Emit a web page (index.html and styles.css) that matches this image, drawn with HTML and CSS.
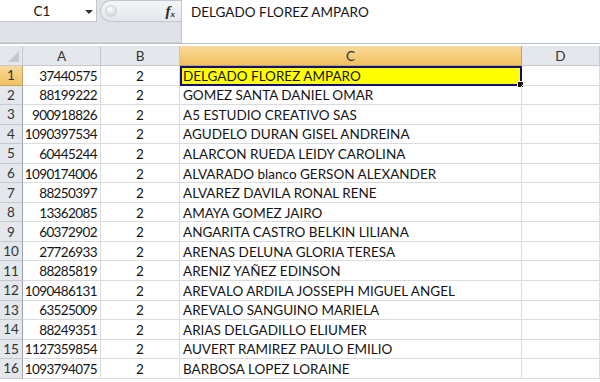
FILE: index.html
```html
<!DOCTYPE html>
<html lang="es">
<head>
    <meta charset="UTF-8">
    <title>Hoja de cálculo</title>
    <link rel="stylesheet" href="styles.css">
</head>
<body>

    <div class="formula-bar">
        <div class="left-part">
            <div class="top-row">
                <div class="name-box">
                    <span class="cell-ref">C1</span>
                    <span class="drop-arrow"></span>
                </div>
                <div class="fx-box">
                    <span class="grip"></span>
                    <span class="fx">f<sub>x</sub></span>
                </div>
            </div>
        </div>
        <div class="formula-input">DELGADO FLOREZ AMPARO</div>
    </div>

    <div class="sheet" id="sheet">
        <div class="corner"><span class="corner-tri"></span></div>
        <div class="col-head">A</div>
        <div class="col-head">B</div>
        <div class="col-head active">C</div>
        <div class="col-head">D</div>
    </div>

    <script>
        const rows = [
            ["37440575", "DELGADO FLOREZ AMPARO"],
            ["88199222", "GOMEZ SANTA DANIEL OMAR"],
            ["900918826", "A5 ESTUDIO CREATIVO SAS"],
            ["1090397534", "AGUDELO DURAN GISEL ANDREINA"],
            ["60445244", "ALARCON RUEDA LEIDY CAROLINA"],
            ["1090174006", "ALVARADO blanco GERSON ALEXANDER"],
            ["88250397", "ALVAREZ DAVILA RONAL RENE"],
            ["13362085", "AMAYA GOMEZ JAIRO"],
            ["60372902", "ANGARITA CASTRO BELKIN LILIANA"],
            ["27726933", "ARENAS DELUNA GLORIA TERESA"],
            ["88285819", "ARENIZ YAÑEZ EDINSON"],
            ["1090486131", "AREVALO ARDILA JOSSEPH MIGUEL ANGEL"],
            ["63525009", "AREVALO SANGUINO MARIELA"],
            ["88249351", "ARIAS DELGADILLO ELIUMER"],
            ["1127359854", "AUVERT RAMIREZ PAULO EMILIO"],
            ["1093794075", "BARBOSA LOPEZ LORAINE"]
        ];

        const sheet = document.getElementById("sheet");

        function addCell(text, cls) {
            const div = document.createElement("div");
            div.className = cls;
            div.textContent = text;
            sheet.appendChild(div);
            return div;
        }

        rows.forEach(function (row, i) {
            addCell(i + 1, i === 0 ? "row-head active" : "row-head");
            addCell(row[0], "cell num");
            addCell("2", "cell mid");
            const c = addCell(row[1], i === 0 ? "cell selected" : "cell");
            if (i === 0) {
                const handle = document.createElement("span");
                handle.className = "fill-handle";
                c.appendChild(handle);
            }
            addCell("", "cell");
        });
    </script>

</body>
</html>
```

FILE: styles.css
```css
body {
    margin: 0;
    width: 600px;
    height: 382px;
    overflow: hidden;
    font-family: 'Lato', 'Liberation Sans', sans-serif;
    font-size: 13.5px;
    color: #141414;
    background: #fff;
}

/* formula bar */
.formula-bar {
    display: flex;
    height: 43px;
    background: #dfe3e8;
    border-bottom: 1px solid #b9c0c9;
}

.left-part {
    width: 181px;
    border-bottom: 1px solid #c9ced5;
}

.top-row {
    display: flex;
    height: 22px;
}

.name-box {
    width: 96px;
    background: #fff;
    border-right: 1px solid #c3c8cf;
    border-bottom: 1px solid #c3c8cf;
    display: flex;
    align-items: center;
    position: relative;
}

.cell-ref {
    width: 78px;
    text-align: center;
    padding-left: 3px;
}

.drop-arrow {
    position: absolute;
    left: 85px;
    top: 10px;
    border-left: 4px solid transparent;
    border-right: 4px solid transparent;
    border-top: 4px solid #333;
}

.fx-box {
    flex: 1;
    margin-left: 3px;
    background: linear-gradient(#f3f5f8, #e3e7ec);
    border: 1px solid #c3c8cf;
    border-right: none;
    border-radius: 11px 0 0 11px;
    display: flex;
    align-items: center;
    justify-content: space-between;
}

.grip {
    width: 10px;
    height: 10px;
    margin-left: 4px;
    border-radius: 50%;
    background: radial-gradient(circle at 40% 35%, #ffffff, #c2c7ce);
    border: 1px solid #cfd3d9;
}

.fx {
    font-family: 'Liberation Serif', serif;
    font-style: italic;
    font-weight: bold;
    font-size: 15px;
    color: #2a2a2a;
    margin-right: 6px;
    line-height: 1;
}

.fx sub {
    font-size: 9px;
    vertical-align: -1px;
}

.formula-input {
    flex: 1;
    background: #fff;
    border-left: 1px solid #c3c8cf;
    padding: 3px 0 0 9px;
    line-height: 18px;
}

/* grid */
.sheet {
    margin-top: 2px;
    display: grid;
    grid-template-columns: 23px 78px 79px 342px 1fr;
    grid-template-rows: 20px repeat(16, 19.56px);
}

.corner, .col-head, .row-head {
    background: #e4e7eb;
    color: #333;
    border-right: 1px solid #c5c9ce;
    border-bottom: 1px solid #c5c9ce;
    display: flex;
    align-items: center;
    justify-content: center;
    box-sizing: border-box;
}

.corner {
    position: relative;
}

.corner-tri {
    position: absolute;
    right: 3px;
    bottom: 3px;
    border-left: 11px solid transparent;
    border-bottom: 11px solid #c6cacf;
}

.col-head {
    padding-top: 1px;
}

.col-head.active, .row-head.active {
    background: linear-gradient(#f9d99b, #f1c15f);
    border-color: #c2a468;
    color: #333;
}

.row-head {
    border-right-color: #9aa3ad;
}

.cell {
    border-right: 1px solid #dadcdd;
    border-bottom: 1px solid #dadcdd;
    box-sizing: border-box;
    display: flex;
    align-items: center;
    padding: 1px 3px 0;
    white-space: nowrap;
    position: relative;
}

.cell.num {
    justify-content: flex-end;
    letter-spacing: -0.6px;
}

.cell.mid {
    justify-content: center;
}

.cell.selected {
    background: #ffff00;
    border: 2px solid #10107a;
    padding-left: 1px;
}

.fill-handle {
    position: absolute;
    right: -4px;
    bottom: -4px;
    width: 5px;
    height: 5px;
    background: #111;
    border: 1px solid #fff;
}
```
